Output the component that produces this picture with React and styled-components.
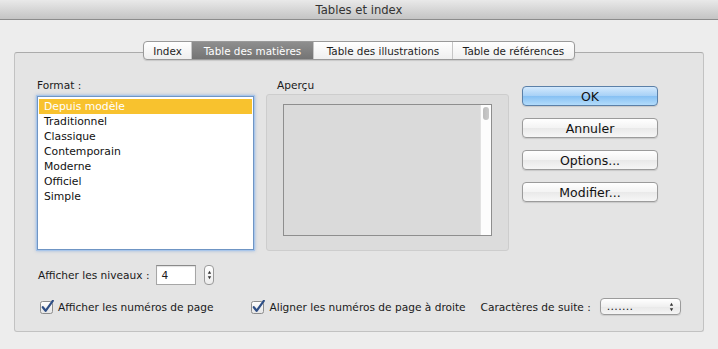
import React from "react";
import styled, { createGlobalStyle } from "styled-components";

const GlobalStyle = createGlobalStyle`
  html, body {
    margin: 0;
    padding: 0;
    background: #ededed;
  }
  body {
    font-family: "DejaVu Sans", "Liberation Sans", sans-serif;
    font-size: 10.6px;
    color: #1a1a1a;
  }
`;

const Window = styled.div`
  width: 718px;
  height: 349px;
  background: #ededed;
  display: flex;
  flex-direction: column;
  overflow: hidden;
`;

const TitleBar = styled.div`
  height: 20px;
  box-sizing: border-box;
  background: linear-gradient(#e9e9e9, #c4c4c4);
  border-bottom: 1px solid #8c8c8c;
  display: flex;
  align-items: center;
  justify-content: center;
  font-size: 11.6px;
  color: #333;
  padding-top: 1px;
`;

const Body = styled.div`
  padding: 21px 14px 0 14px;
  display: flex;
  flex-direction: column;
`;

const TabBar = styled.div`
  display: flex;
  justify-content: center;
  margin-bottom: -8px;
  position: relative;
  z-index: 1;
`;

const Tabs = styled.div`
  display: flex;
  height: 17px;
  border: 1px solid #9a9a9a;
  border-radius: 4px;
  overflow: hidden;
  box-shadow: 0 1px 1px rgba(0, 0, 0, 0.12);
  background: linear-gradient(#ffffff, #efefef);
`;

const Tab = styled.div`
  display: flex;
  align-items: center;
  justify-content: center;
  width: ${(p) => p.$w}px;
  box-sizing: border-box;
  font-size: 10.4px;
  color: ${(p) => (p.$active ? "#fff" : "#1e1e1e")};
  background: ${(p) =>
    p.$active ? "linear-gradient(#8e8e8e, #747474)" : "transparent"};
  border-left: ${(p) => (p.$first ? "none" : "1px solid #c6c6c6")};
`;

const Panel = styled.div`
  height: 280px;
  box-sizing: border-box;
  background: #e4e4e4;
  border: 1px solid #c2c2c2;
  border-top-color: #ababab;
  border-radius: 3px;
  padding: 26px 0 0 22px;
  display: flex;
  flex-direction: column;
`;

const TopSection = styled.div`
  display: flex;
`;

const Column = styled.div`
  display: flex;
  flex-direction: column;
  width: ${(p) => p.$w}px;
  margin-right: ${(p) => p.$mr || 0}px;
  padding-top: ${(p) => p.$pt || 0}px;
`;

const Label = styled.div`
  height: 13px;
  line-height: 13px;
  padding-left: ${(p) => p.$pl || 0}px;
  margin-bottom: ${(p) => p.$mb}px;
  white-space: nowrap;
`;

const ListBox = styled.div`
  height: 154px;
  box-sizing: border-box;
  background: #fff;
  border: 1px solid #6f95c4;
  box-shadow: 0 0 0 1px #a9c6ea, 0 0 3px 1px rgba(100, 150, 215, 0.55);
  padding: 2px 1px;
`;

const ListItem = styled.div`
  height: 15px;
  line-height: 15px;
  padding-left: 5px;
  font-size: 10.8px;
  color: ${(p) => (p.$selected ? "#fff" : "#111")};
  background: ${(p) => (p.$selected ? "#f8c22e" : "transparent")};
`;

const PreviewFrame = styled.div`
  height: 157px;
  box-sizing: border-box;
  background: #dcdcdc;
  border: 1px solid #cdcdcd;
  border-radius: 3px;
  padding: 9px 16px 0 16px;
`;

const PreviewBox = styled.div`
  height: 132px;
  box-sizing: border-box;
  border: 1px solid #8e8e8e;
  background: #dadada;
  display: flex;
  justify-content: flex-end;
`;

const ScrollTrack = styled.div`
  width: 11px;
  background: #fdfdfd;
  border-left: 1px solid #e2e2e2;
  padding: 2px 2px;
  box-sizing: border-box;
`;

const ScrollThumb = styled.div`
  height: 13px;
  border-radius: 4px;
  background: linear-gradient(90deg, #bdbdbd, #cacaca);
`;

const Button = styled.div`
  height: 20px;
  box-sizing: border-box;
  margin-bottom: 12px;
  display: flex;
  align-items: center;
  justify-content: center;
  border-radius: 4px;
  font-size: 12.5px;
  color: #111;
  border: 1px solid ${(p) => (p.$primary ? "#5b80a8" : "#9b9b9b")};
  background: ${(p) =>
    p.$primary
      ? "linear-gradient(#d3e9fd, #a6d0f6 50%, #86c0f3 51%, #b3dcfb)"
      : "linear-gradient(#ffffff, #f3f3f3 50%, #e9e9e9 51%, #f6f6f6)"};
  box-shadow: 0 1px 1px rgba(0, 0, 0, 0.12);
`;

const Row = styled.div`
  display: flex;
  align-items: center;
  height: ${(p) => p.$h}px;
  margin-top: ${(p) => p.$mt}px;
  padding-left: ${(p) => p.$pl || 0}px;
`;

const Spacer = styled.div`
  width: ${(p) => p.$w}px;
  flex: none;
`;

const NumberInput = styled.div`
  width: 40px;
  height: 20px;
  box-sizing: border-box;
  background: #fff;
  border: 1px solid #a6a6a6;
  border-top-color: #8a8a8a;
  box-shadow: inset 0 1px 1px rgba(0, 0, 0, 0.12);
  padding: 2px 4px;
  line-height: 14px;
`;

const Stepper = styled.div`
  width: 10px;
  height: 20px;
  box-sizing: border-box;
  border: 1px solid #9a9a9a;
  border-radius: 4px;
  background: linear-gradient(#ffffff, #ececec);
  display: flex;
  align-items: center;
  justify-content: center;
`;

const CheckGroup = styled.div`
  display: flex;
  align-items: center;
  gap: 4px;
  white-space: nowrap;
`;

const Select = styled.div`
  width: 81px;
  height: 17px;
  box-sizing: border-box;
  border: 1px solid #9b9b9b;
  border-radius: 4px;
  background: linear-gradient(#ffffff, #f0f0f0 50%, #e8e8e8 51%, #f5f5f5);
  box-shadow: 0 1px 1px rgba(0, 0, 0, 0.1);
  display: flex;
  align-items: center;
  justify-content: space-between;
  padding: 0 6px 0 6px;
  font-size: 11px;
  letter-spacing: 0.3px;
`;

const CheckBox = () => (
  <svg width="14" height="14" viewBox="0 0 14 14">
    <defs>
      <linearGradient id="cbg" x1="0" y1="0" x2="0" y2="1">
        <stop offset="0" stopColor="#ffffff" />
        <stop offset="1" stopColor="#e4e4e4" />
      </linearGradient>
    </defs>
    <rect x="0.5" y="1.5" width="12" height="12" rx="2" fill="url(#cbg)" stroke="#8d8d8d" />
    <path
      d="M2.8 7.2 L5.6 10.8 L12.8 0.8"
      fill="none"
      stroke="#2f4f86"
      strokeWidth="2.2"
      strokeLinecap="round"
      strokeLinejoin="round"
    />
  </svg>
);

const UpDown = ({ size = 6 }) => (
  <svg width="5" height={size * 2} viewBox="0 0 5 12">
    <path d="M2.5 1 L4.5 4.5 L0.5 4.5 Z" fill="#333" />
    <path d="M2.5 11 L4.5 7.5 L0.5 7.5 Z" fill="#333" />
  </svg>
);

const formats = [
  "Depuis modèle",
  "Traditionnel",
  "Classique",
  "Contemporain",
  "Moderne",
  "Officiel",
  "Simple",
];

const tabs = [
  { label: "Index", w: 47 },
  { label: "Table des matières", w: 122, active: true },
  { label: "Table des illustrations", w: 139 },
  { label: "Table de références", w: 122 },
];

export default function App() {
  return (
    <>
      <GlobalStyle />
      <Window>
        <TitleBar>Tables et index</TitleBar>
        <Body>
          <TabBar>
            <Tabs>
              {tabs.map((t, i) => (
                <Tab key={t.label} $w={t.w} $active={t.active} $first={i === 0}>
                  {t.label}
                </Tab>
              ))}
            </Tabs>
          </TabBar>
          <Panel>
            <TopSection>
              <Column $w={217} $mr={12}>
                <Label $mb={4}>Format :</Label>
                <ListBox>
                  {formats.map((f, i) => (
                    <ListItem key={f} $selected={i === 0}>
                      {f}
                    </ListItem>
                  ))}
                </ListBox>
              </Column>
              <Column $w={243} $mr={13}>
                <Label $mb={2} $pl={11}>
                  Aperçu
                </Label>
                <PreviewFrame>
                  <PreviewBox>
                    <ScrollTrack>
                      <ScrollThumb />
                    </ScrollTrack>
                  </PreviewBox>
                </PreviewFrame>
              </Column>
              <Column $w={136} $pt={7}>
                <Button $primary>OK</Button>
                <Button>Annuler</Button>
                <Button>Options...</Button>
                <Button>Modifier...</Button>
              </Column>
            </TopSection>
            <Row $h={20} $mt={14} $pl={1}>
              <span>Afficher les niveaux :</span>
              <Spacer $w={7} />
              <NumberInput>4</NumberInput>
              <Spacer $w={8} />
              <Stepper>
                <UpDown size={5} />
              </Stepper>
            </Row>
            <Row $h={17} $mt={13} $pl={3}>
              <CheckGroup>
                <CheckBox />
                <span>Afficher les numéros de page</span>
              </CheckGroup>
              <Spacer $w={38} />
              <CheckGroup>
                <CheckBox />
                <span>Aligner les numéros de page à droite</span>
              </CheckGroup>
              <Spacer $w={15} />
              <span>Caractères de suite :</span>
              <Spacer $w={9} />
              <Select>
                <span>.......</span>
                <UpDown size={5} />
              </Select>
            </Row>
          </Panel>
        </Body>
      </Window>
    </>
  );
}
